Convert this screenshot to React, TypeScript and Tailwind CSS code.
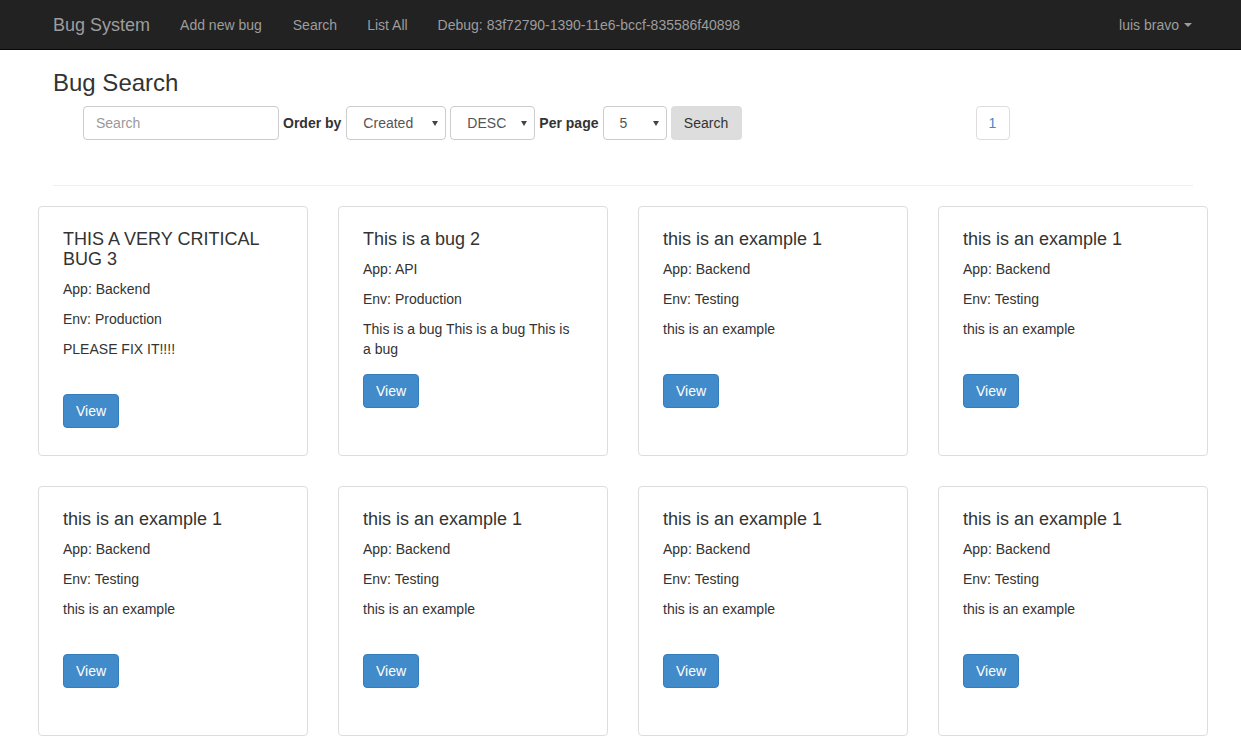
import React from "react";

type Bug = { title: string; app: string; env: string; desc: string };

const bugs: Bug[] = [
  { title: "THIS A VERY CRITICAL BUG 3", app: "Backend", env: "Production", desc: "PLEASE FIX IT!!!!" },
  { title: "This is a bug 2", app: "API", env: "Production", desc: "This is a bug This is a bug This is a bug" },
  { title: "this is an example 1", app: "Backend", env: "Testing", desc: "this is an example" },
  { title: "this is an example 1", app: "Backend", env: "Testing", desc: "this is an example" },
  { title: "this is an example 1", app: "Backend", env: "Testing", desc: "this is an example" },
  { title: "this is an example 1", app: "Backend", env: "Testing", desc: "this is an example" },
  { title: "this is an example 1", app: "Backend", env: "Testing", desc: "this is an example" },
  { title: "this is an example 1", app: "Backend", env: "Testing", desc: "this is an example" },
];

function Caret({ color }: { color: string }) {
  return (
    <svg width="8" height="4" viewBox="0 0 8 4" className="inline-block">
      <path d="M0 0 L8 0 L4 4 Z" fill={color} />
    </svg>
  );
}

function FakeSelect({ value, width }: { value: string; width: string }) {
  return (
    <div
      className={`${width} h-[34px] border border-[#ccc] rounded-[4px] bg-white flex items-center justify-between pl-[16px] pr-[7px] text-[14px] text-[#555]`}
    >
      <span>{value}</span>
      <svg width="6" height="5" viewBox="0 0 6 5">
        <path d="M0 0 L6 0 L3 5 Z" fill="#444" />
      </svg>
    </div>
  );
}

function Card({ bug }: { bug: Bug }) {
  return (
    <div className="h-[250px] border border-[#ddd] rounded-[4px] bg-white pl-[24px] pr-[30px] pt-[23px]">
      <h3 className="text-[18px] leading-[1.1] text-[#333] mb-[9px]">{bug.title}</h3>
      <p className="text-[14px] leading-[20px] mb-[10px]">App: {bug.app}</p>
      <p className="text-[14px] leading-[20px] mb-[10px]">Env: {bug.env}</p>
      <p className="text-[14px] leading-[20px] min-h-[40px] mb-[15px]">{bug.desc}</p>
      <button className="h-[34px] px-[12px] bg-[#428bca] border border-[#357ebd] rounded-[4px] text-white text-[14px] leading-[20px]">
        View
      </button>
    </div>
  );
}

export default function App() {
  return (
    <div
      className="min-h-[750px] bg-white text-[#333] text-[14px]"
      style={{ fontFamily: '"Liberation Sans", Arial, Helvetica, sans-serif' }}
    >
      <nav className="h-[50px] bg-[#222] border-b border-[#080808]">
        <div className="w-[1170px] ml-[38px] h-full flex items-center text-[#9d9d9d]">
          <span className="text-[18px] leading-[20px] pl-[15px] pr-[15px]">Bug System</span>
          <span className="px-[15px] leading-[20px]">Add new bug</span>
          <span className="pl-[16px] pr-[15px] leading-[20px]">Search</span>
          <span className="pl-[15px] pr-[15px] leading-[20px]">List All</span>
          <span className="pl-[15px] pr-[15px] leading-[20px]">Debug: 83f72790-1390-11e6-bccf-835586f40898</span>
          <span className="ml-auto pr-[16px] leading-[20px] flex items-center gap-[5px]">
            luis bravo <Caret color="#9d9d9d" />
          </span>
        </div>
      </nav>

      <div className="w-[1170px] ml-[38px]">
        <div className="px-[15px]">
          <h3 className="text-[24px] leading-[1.1] mt-[20px] mb-[10px] text-[#333]">Bug Search</h3>
          <div className="flex items-center pl-[30px]">
            <input
              placeholder="Search"
              className="w-[196px] h-[34px] border border-[#ccc] rounded-[4px] px-[12px] text-[14px] text-[#555] placeholder:text-[#999] outline-none"
            />
            <span className="font-bold ml-[4px] mr-[5px]">Order by</span>
            <FakeSelect value="Created" width="w-[100px]" />
            <div className="w-[4px]" />
            <FakeSelect value="DESC" width="w-[85px]" />
            <span className="font-bold ml-[4px] mr-[4px]">Per page</span>
            <FakeSelect value="5" width="w-[64px]" />
            <button className="ml-[4px] w-[71px] h-[34px] bg-[#ddd] rounded-[4px] text-[14px] text-[#333]">
              Search
            </button>
            <div className="ml-[234px] w-[34px] h-[34px] border border-[#ddd] rounded-[4px] flex items-center justify-center text-[#428bca]">
              1
            </div>
          </div>
          <hr className="mt-[45px] border-t border-[#eee]" />
        </div>

        <div className="grid grid-cols-4 gap-[30px] mt-[20px]">
          {bugs.map((b, i) => (
            <Card key={i} bug={b} />
          ))}
        </div>
      </div>
    </div>
  );
}
